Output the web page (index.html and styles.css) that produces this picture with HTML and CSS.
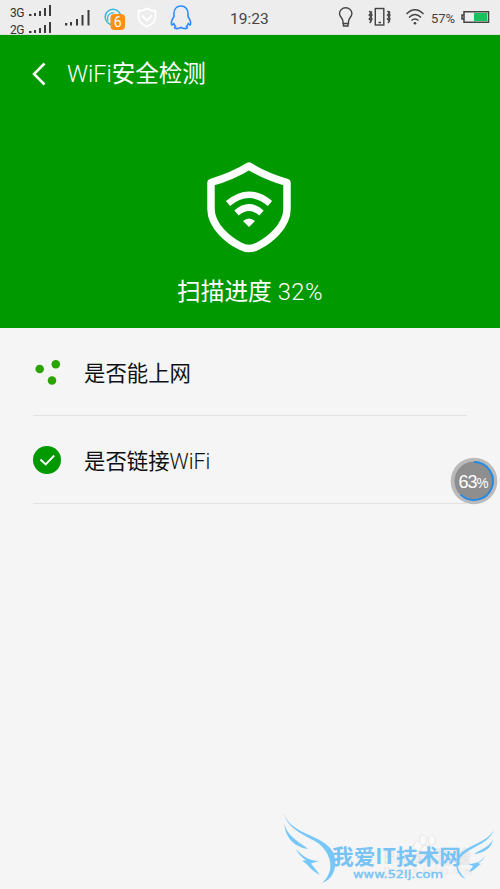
FILE: index.html
```html
<!DOCTYPE html>
<html lang="zh-CN">
<head>
<meta charset="utf-8">
<title>WiFi安全检测</title>
<link rel="stylesheet" href="styles.css">
</head>
<body>
<div class="status">
  <div class="sims">
    <div class="sim"><span class="net">3G</span><svg width="23" height="13" fill="#3c3c3c"><path d="M0 10h2.500v2H0zM5 9h2v3H5zM10 7h2v5h-2zM15 4h2v8h-2zM20 1h2v11h-2z"/></svg></div>
    <div class="sim"><span class="net">2G</span><svg width="23" height="13" fill="#3c3c3c"><path d="M0 10h2.500v2H0zM5 9h2v3H5zM10 7h2v5h-2zM15 4h2v8h-2zM20 1h2v11h-2z"/></svg></div>
  </div>
  <svg class="signal" width="26" height="17" fill="#3c3c3c"><path d="M0 13h2.300v2.500H0zM5 12h2v3.500H5zM11 9h2v6.500h-2zM16.500 5h2v10.500h-2zM22.500 0h2v15.500h-2z"/></svg>
  <svg class="cloud" width="24" height="24" fill="none"><circle cx="9" cy="10" r="7.800" stroke="#36b9dd" stroke-width="1.500"/><path d="M4 14C2.500 8 6 5.500 10 6" stroke="#36b9dd" stroke-width="1.200"/><rect x="6.500" y="7" width="14.500" height="16" rx="4" fill="#ff9011"/><text class="badge" x="13.800" y="20">6</text></svg>
  <svg class="shield-small" width="20" height="21" fill="none" stroke="#fff" stroke-width="1.800" stroke-linejoin="round"><path d="M10 1.200C8 3 5 4 1.500 4v6.500c0 4.300 5 7.500 8.500 9.300 3.500-1.800 8.500-5 8.500-9.300V4C15 4 12 3 10 1.200zM5 8.500l5 5 5-5"/></svg>
  <svg class="penguin" width="22" height="25" fill="none" stroke="#2b8bff" stroke-width="1.600" stroke-linejoin="round"><path d="M11 1C6.500 1 4 4.300 4 8.500v3c-1.700 2.400-3 5-2.600 7.700.3 1.500 1.500.3 2.300-.8.400 1.500 1.100 2.400 2 3.200-2 .8-1.300 2 .8 2 2 0 3.500-.1 4.500-1.200 1 1.100 2.500 1.200 4.500 1.200 2.100 0 2.800-1.200.8-2 .9-.8 1.600-1.700 2-3.200.8 1.100 2 2.300 2.300.8.400-2.700-.9-5.300-2.600-7.700v-3C18 4.300 15.500 1 11 1z"/></svg>
  <span class="clock">19:23</span>
  <svg class="bulb" width="16" height="22" fill="none" stroke="#444" stroke-width="1.400"><path d="M5 14.500C5 11 1.500 10 1.500 6.500a6.200 5.700 0 0 1 12.400 0C13.900 10 10.500 11 10.500 14.500v2H5zM5.500 17v2h4.500v-2"/></svg>
  <svg class="vibrate" width="24" height="20" fill="none" stroke="#444" stroke-width="1.400"><rect x="7.300" y="1.500" width="8.500" height="16.500"/><path d="M10.500 15.500h2.500M1.200 4l2 2-2 2 2 2-2 2 2 2-1.500 2M4 4.500L2.500 6 4 8l-1.500 2L4 12l-1.500 2M19.500 4l2 2-2 2 2 2-2 2 2 2-1.500 2M22 4.500L20.500 6 22 8l-1.500 2 1.500 2-1.500 2"/></svg>
  <svg class="wifi-small" width="20" height="18" fill="none" stroke="#444" stroke-width="1.500"><path d="M1.500 6q8.500-8.500 17 0M4 9.500q6-6 12 0M6.500 12.500q3.500-3 7 0"/><circle cx="10" cy="15.300" r="1.300" fill="#444" stroke="none"/></svg>
  <span class="percent">57%</span>
  <svg class="battery" width="29" height="14"><path d="M3 1.700h24.500v10.600H3zM3 5H1v4h2" fill="#eee" stroke="#444" stroke-width="1.500"/><rect x="13" y="3" width="13" height="8" fill="#16c25a"/></svg>
</div>
<header class="hero">
  <div class="title"><svg width="14" height="24" fill="none" stroke="#fff" stroke-width="2.500"><path d="M12.500 1.500L2 12l10.500 10.500"/></svg><h1><span class="latin">WiFi</span>安全检测</h1></div>
  <svg class="shield" width="88" height="94" viewBox="0 0 88 94" fill="none" stroke="#fff" stroke-width="7.500" stroke-linejoin="round"><path d="M44 6Q28 16 6 22.500V49C6 67 25 81 35 86Q44 91 53 86C63 81 82 67 82 49V22.500Q60 16 44 6z"/><path d="M23 43.500Q44 26 65 43.500M31.500 53Q44 42 56.500 53" stroke-width="6.500"/><path d="M38 61Q44 56 50 61L44 67z" fill="#fff" stroke="none"/></svg>
  <p class="progress">扫描进度 <span class="latin">32%</span></p>
</header>
<main class="list">
  <div class="row"><svg width="28" height="28" fill="#2ba300"><circle cx="6.700" cy="11" r="4.300"/><circle cx="22.800" cy="6.300" r="4.300"/><circle cx="19" cy="22.500" r="4.300"/></svg><span>是否能上网</span></div>
  <div class="row"><svg width="28" height="28"><circle cx="14" cy="14" r="14" fill="#009a00"/><path d="M7.500 13.500l5.200 5 8.500-9" fill="none" stroke="#fff" stroke-width="1.900"/></svg><span>是否链接<span class="latin">WiFi</span></span></div>
</main>
<svg class="float" width="48" height="48"><circle cx="24" cy="24" r="23.300" fill="#bababa"/><circle cx="24" cy="24" r="19.500" fill="#8e8e8e"/><path d="M24 5A19 19 0 1 1 10.500 37.400" fill="none" stroke="#248be5" stroke-width="2"/><text x="8.500" y="31" class="big">63</text><text x="26.500" y="31" class="pct" textLength="12" lengthAdjust="spacingAndGlyphs">%</text></svg>
<svg class="watermark" width="230" height="89">
  <g class="paw"><ellipse cx="148" cy="46" rx="4" ry="5"/><ellipse cx="153" cy="40" rx="3.500" ry="5"/><ellipse cx="162" cy="40" rx="3.500" ry="5"/><path d="M157 45c-4 0-8 6-8 8s3 3 8 2c5 1 8 0 8-2s-4-8-8-8z"/><text x="114" y="63" textLength="86">Baidu经验</text><text x="114" y="74" class="tiny" textLength="88">jingyan.baidu.com</text></g>
  <g class="wings"><path d="M14 13C20 37 61 34 65 58C67 71 61 80 52 83C66 71 61 53 48 43C35 35 17 29 14 13z"/><path d="M14.500 24C17 36 28 41 38 49C24 47 15 37 14.500 24z"/><path d="M26 49C33 57 40 61 49 61L41 63.500L50 75C38 69 38 63 32 61L36 60Q29 56 26 49z"/><path d="M224 30C219 43 202 47 194 54C184 62 187 71 196 79C184 75 184 59 192 52C202 44 218 41 224 30z"/><path d="M223 39C220 47 211 49 204 54C214 53 222 48 223 39z"/><path d="M215 56C211 62 205 64 198 64L203 66L199 72C206 70 207 66 211 64L208 63Q213 61 215 56z"/></g>
  <text class="brand" x="62" y="64" textLength="129" lengthAdjust="spacingAndGlyphs">我爱IT技术网</text>
  <text class="site" x="83" y="77.500" textLength="90" lengthAdjust="spacingAndGlyphs">www.52ij.com</text>
</svg>
</body>
</html>
```

FILE: styles.css
```css
* { box-sizing: border-box; }
body {
  margin: 0;
  width: 500px;
  height: 889px;
  position: relative;
  overflow: hidden;
  background: #f5f5f5;
  color: #111;
  font-family: Roboto, "Noto Sans CJK SC", sans-serif;
}
svg { display: block; flex: none; }
.status {
  height: 35px;
  display: flex;
  align-items: flex-start;
  background: #ededed;
  border-bottom: 1px solid #ddd;
  color: #444;
}
.sims { padding: 4px 0 0 10px; width: 65px; }
.sim { display: flex; height: 17px; }
.sim svg { margin-left: 4px; }
.net { width: 15px; font: 12px/18px Roboto, sans-serif; letter-spacing: -0.5px; color: #333; }
.signal { margin-top: 10px; }
.cloud { margin: 7px 0 0 13px; }
.badge { fill: #fff; font: 14px Roboto, sans-serif; text-anchor: middle; }
.shield-small { margin: 7px 0 0 9px; }
.penguin { margin: 5px 0 0 13px; }
.clock { margin-left: 38px; width: 42px; font: 15.500px/38px Roboto, sans-serif; }
.bulb { margin: 7px 0 0 66px; }
.vibrate { margin: 7px 0 0 14px; }
.wifi-small { margin: 8px 0 0 13px; }
.percent { margin-left: 6px; width: 30px; font: 13px/37px Roboto, sans-serif; }
.battery { margin: 10px 0 0 0; }
.hero { height: 293px; background: #009a00; color: #fff; }
.title { display: flex; align-items: center; height: 77px; padding-left: 32px; }
h1 { margin: 0 0 0 21px; font-size: 23.500px; line-height: 30px; font-weight: 400; white-space: nowrap; }
.latin { font-weight: 300; }
.shield { margin: 48px auto 0 205px; }
.progress { margin: 21px 0 0; text-align: center; font-size: 23.700px; line-height: 34px; }
.progress .latin { letter-spacing: 0.5px; }
.list { padding: 0 33px; }
.row { display: flex; align-items: center; height: 88px; border-bottom: 1px solid #e1e1e1; }
.row > span { margin: 4px 0 0 23px; font-size: 21.400px; line-height: 30px; }
.float { position: absolute; left: 450px; top: 457px; }
.float text { fill: #fff; font-family: "Liberation Sans", sans-serif; }
.float .big { font-size: 18px; letter-spacing: -1px; }
.float .pct { font-size: 14px; }
.watermark { position: absolute; left: 270px; top: 800px; }
.paw { fill: #f9f9f9; stroke: #e2e2e2; stroke-width: 0.8; }
.paw text { font: 700 17px Roboto, "Noto Sans CJK SC", sans-serif; }
.paw .tiny { font-size: 9px; stroke-width: 0.3; }
.wings { fill: #78c7f9; }
.brand { fill: #78c3f4; font: 700 21px "Noto Sans CJK SC", sans-serif; }
.site { fill: #78c3f4; font: 400 11px "DejaVu Sans", sans-serif; stroke: #78c3f4; stroke-width: 0.4; }
```
